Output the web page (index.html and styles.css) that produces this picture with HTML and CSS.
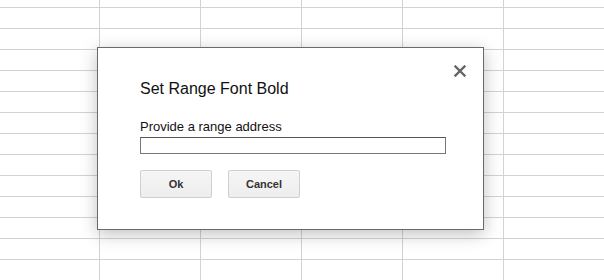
FILE: index.html
```html
<!DOCTYPE html>
<html lang="en">
<head>
    <meta charset="UTF-8">
    <title>Set Range Font Bold</title>
    <link rel="stylesheet" href="styles.css">
</head>
<body>
    <div class="sheet"></div>

    <div class="dialog">
        <button class="close" title="Close">
            <svg width="12" height="12" viewBox="0 0 12 12">
                <path d="M1.5 1.5 L10.5 10.5 M10.5 1.5 L1.5 10.5" stroke="#666" stroke-width="2.4" stroke-linecap="square"/>
            </svg>
        </button>
        <h2 class="title">Set Range Font Bold</h2>
        <label class="label" for="range">Provide a range address</label>
        <input class="field" id="range" type="text">
        <div class="actions">
            <button class="btn">Ok</button>
            <button class="btn">Cancel</button>
        </div>
    </div>
</body>
</html>
```

FILE: styles.css
```css
html, body {
    margin: 0;
    height: 100%;
}
body {
    font-family: "Liberation Sans", Arial, sans-serif;
    color: #222;
    background: #fff;
    overflow: hidden;
}
/* spreadsheet grid behind the dialog */
.sheet {
    height: 100%;
    background-color: #fff;
    background-image:
        linear-gradient(to bottom, transparent 20px, #d3d3d3 20px),
        linear-gradient(to right, transparent 100px, #d3d3d3 100px);
    background-size: 100% 21px, 101px 100%;
    background-position: 0 8px, 100px 0;
}
.dialog {
    position: absolute;
    left: 97px;
    top: 47px;
    width: 302px;
    height: 119px;
    padding: 31px 41px 31px 42px;
    background: #fff;
    border: 1px solid #6a6a6a;
    box-shadow: 0 4px 16px rgba(0,0,0,0.25);
}
.close {
    position: absolute;
    top: 17px;
    right: 17px;
    width: 12px;
    height: 12px;
    padding: 0;
    border: none;
    background: none;
    cursor: pointer;
}
.close svg {
    display: block;
}
.title {
    margin: 0 0 20px;
    font-size: 16px;
    line-height: 20px;
    font-weight: normal;
    color: #111;
}
.label {
    display: block;
    font-size: 13px;
    line-height: 16px;
    color: #111;
}
.field {
    display: block;
    box-sizing: border-box;
    width: 306px;
    height: 17px;
    margin: 2px 0 0;
    padding: 0 3px;
    border: 1px solid #777;
    border-top-color: #555;
    font-family: inherit;
    font-size: 13px;
    outline: none;
}
.actions {
    display: flex;
    gap: 16px;
    margin-top: 16px;
}
.btn {
    box-sizing: border-box;
    width: 72px;
    height: 28px;
    padding: 0 8px;
    border: 1px solid #cfcfcf;
    border-radius: 2px;
    background: linear-gradient(to bottom, #f6f6f6, #ededed);
    color: #333;
    font-family: inherit;
    font-size: 11px;
    font-weight: bold;
    cursor: pointer;
}
```
